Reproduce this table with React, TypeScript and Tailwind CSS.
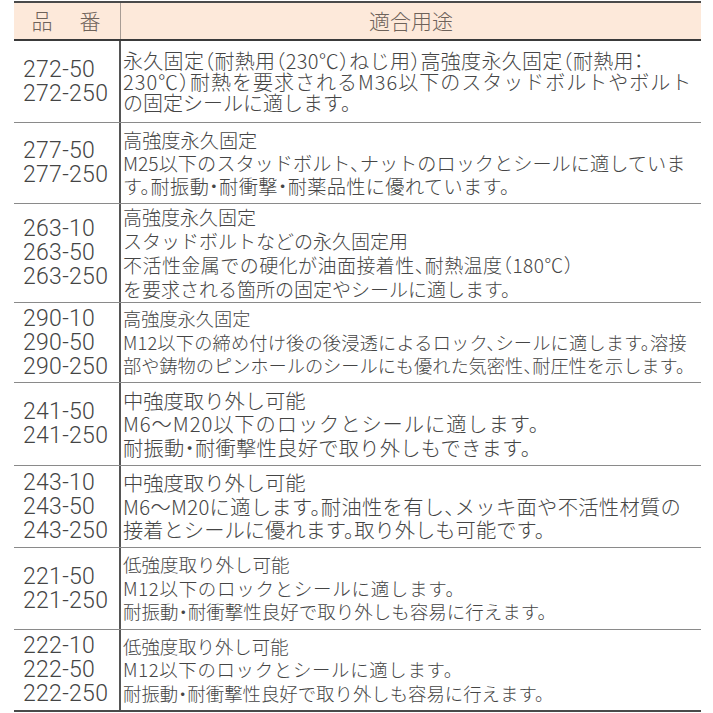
import React from "react";

type Line = { t: string; c: string };
type Row = { nums: string[]; lines: Line[]; h: string; lh: string; fs: string; border: boolean };

const rows: Row[] = [
  {
    nums: ["272-50", "272-250"],
    lines: [
      { t: "永久固定（耐熱用（230℃）ねじ用）高強度永久固定（耐熱用：", c: "tracking-[0.3px]" },
      { t: "230℃）耐熱を要求されるM36以下のスタッドボルトやボルト", c: "tracking-[1px]" },
      { t: "の固定シールに適します。", c: "tracking-[0px]" },
    ],
    h: "h-[82px]",
    lh: "leading-[21px]",
    fs: "text-[20px]",
    border: true,
  },
  {
    nums: ["277-50", "277-250"],
    lines: [
      { t: "高強度永久固定", c: "tracking-[0px]" },
      { t: "M25以下のスタッドボルト、ナットのロックとシールに適していま", c: "tracking-[0px]" },
      { t: "す。耐振動・耐衝撃・耐薬品性に優れています。", c: "tracking-[0.35px]" },
    ],
    h: "h-[81px]",
    lh: "leading-[23px]",
    fs: "text-[19.2px]",
    border: true,
  },
  {
    nums: ["263-10", "263-50", "263-250"],
    lines: [
      { t: "高強度永久固定", c: "tracking-[0px]" },
      { t: "スタッドボルトなどの永久固定用", c: "tracking-[0px]" },
      { t: "不活性金属での硬化が油面接着性、耐熱温度（180℃）", c: "tracking-[0.45px]" },
      { t: "を要求される箇所の固定やシールに適します。", c: "tracking-[0px]" },
    ],
    h: "h-[99px]",
    lh: "leading-[24px]",
    fs: "text-[19px]",
    border: true,
  },
  {
    nums: ["290-10", "290-50", "290-250"],
    lines: [
      { t: "高強度永久固定", c: "tracking-[0px]" },
      { t: "M12以下の締め付け後の後浸透によるロック、シールに適します。溶接", c: "tracking-[0.2px]" },
      { t: "部や鋳物のピンホールのシールにも優れた気密性、耐圧性を示します。", c: "tracking-[0px]" },
    ],
    h: "h-[80px]",
    lh: "leading-[23.5px]",
    fs: "text-[18.2px]",
    border: true,
  },
  {
    nums: ["241-50", "241-250"],
    lines: [
      { t: "中強度取り外し可能", c: "tracking-[0px]" },
      { t: "M6～M20以下のロックとシールに適します。", c: "tracking-[0.9px]" },
      { t: "耐振動・耐衝撃性良好で取り外しもできます。", c: "tracking-[0.25px]" },
    ],
    h: "h-[83px]",
    lh: "leading-[23.5px]",
    fs: "text-[20.3px]",
    border: true,
  },
  {
    nums: ["243-10", "243-50", "243-250"],
    lines: [
      { t: "中強度取り外し可能", c: "tracking-[0px]" },
      { t: "M6～M20に適します。耐油性を有し、メッキ面や不活性材質の", c: "tracking-[0.3px]" },
      { t: "接着とシールに優れます。取り外しも可能です。", c: "tracking-[0px]" },
    ],
    h: "h-[82px]",
    lh: "leading-[23.5px]",
    fs: "text-[20.3px]",
    border: true,
  },
  {
    nums: ["221-50", "221-250"],
    lines: [
      { t: "低強度取り外し可能", c: "tracking-[0px]" },
      { t: "M12以下のロックとシールに適します。", c: "tracking-[0.7px]" },
      { t: "耐振動・耐衝撃性良好で取り外しも容易に行えます。", c: "tracking-[0px]" },
    ],
    h: "h-[82px]",
    lh: "leading-[23.5px]",
    fs: "text-[18.5px]",
    border: true,
  },
  {
    nums: ["222-10", "222-50", "222-250"],
    lines: [
      { t: "低強度取り外し可能", c: "tracking-[0px]" },
      { t: "M12以下のロックとシールに適します。", c: "tracking-[0.7px]" },
      { t: "耐振動・耐衝撃性良好で取り外しも容易に行えます。", c: "tracking-[0px]" },
    ],
    h: "h-[80px]",
    lh: "leading-[23.5px]",
    fs: "text-[18.4px]",
    border: false,
  },
];

export default function App() {
  return (
    <div className="w-[713px] h-[713px] bg-white pl-[14px] pr-[12px] pt-[1px] overflow-hidden">
      <div className="border-t-2 border-b-2 border-[#4a4a4a]">
        <div className="grid grid-cols-[107px_1fr] h-[38px] bg-[#fde9da] border-b-2 border-[#3a3a3a] text-[#6e625a] text-[21px] font-['Noto_Sans_CJK_JP',sans-serif] font-light">
          <div className="flex items-center justify-center gap-[27px] border-r border-[#a89c94] pr-[2px]">
            <span>品</span>
            <span>番</span>
          </div>
          <div className="flex items-center justify-center">適合用途</div>
        </div>
        {rows.map((r, i) => (
          <div
            key={i}
            className={`grid grid-cols-[107px_1fr] ${r.h} ${r.border ? "border-b border-[#8a8a8a]" : ""}`}
          >
            <div className="flex flex-col justify-center pl-[9px] border-r-2 border-[#555555] text-[23px] leading-[24px] text-[#444444] font-['Roboto',sans-serif] font-light tracking-[0.3px]">
              {r.nums.map((n) => (
                <div key={n} className="whitespace-nowrap">{n}</div>
              ))}
            </div>
            <div
              className={`flex flex-col justify-center pl-[2px] ${r.fs} ${r.lh} text-[#454545] font-['Noto_Sans_CJK_JP',sans-serif] font-light [font-feature-settings:'halt']`}
            >
              {r.lines.map((l, j) => (
                <div key={j} className={`whitespace-nowrap ${l.c}`}>{l.t}</div>
              ))}
            </div>
          </div>
        ))}
      </div>
    </div>
  );
}
